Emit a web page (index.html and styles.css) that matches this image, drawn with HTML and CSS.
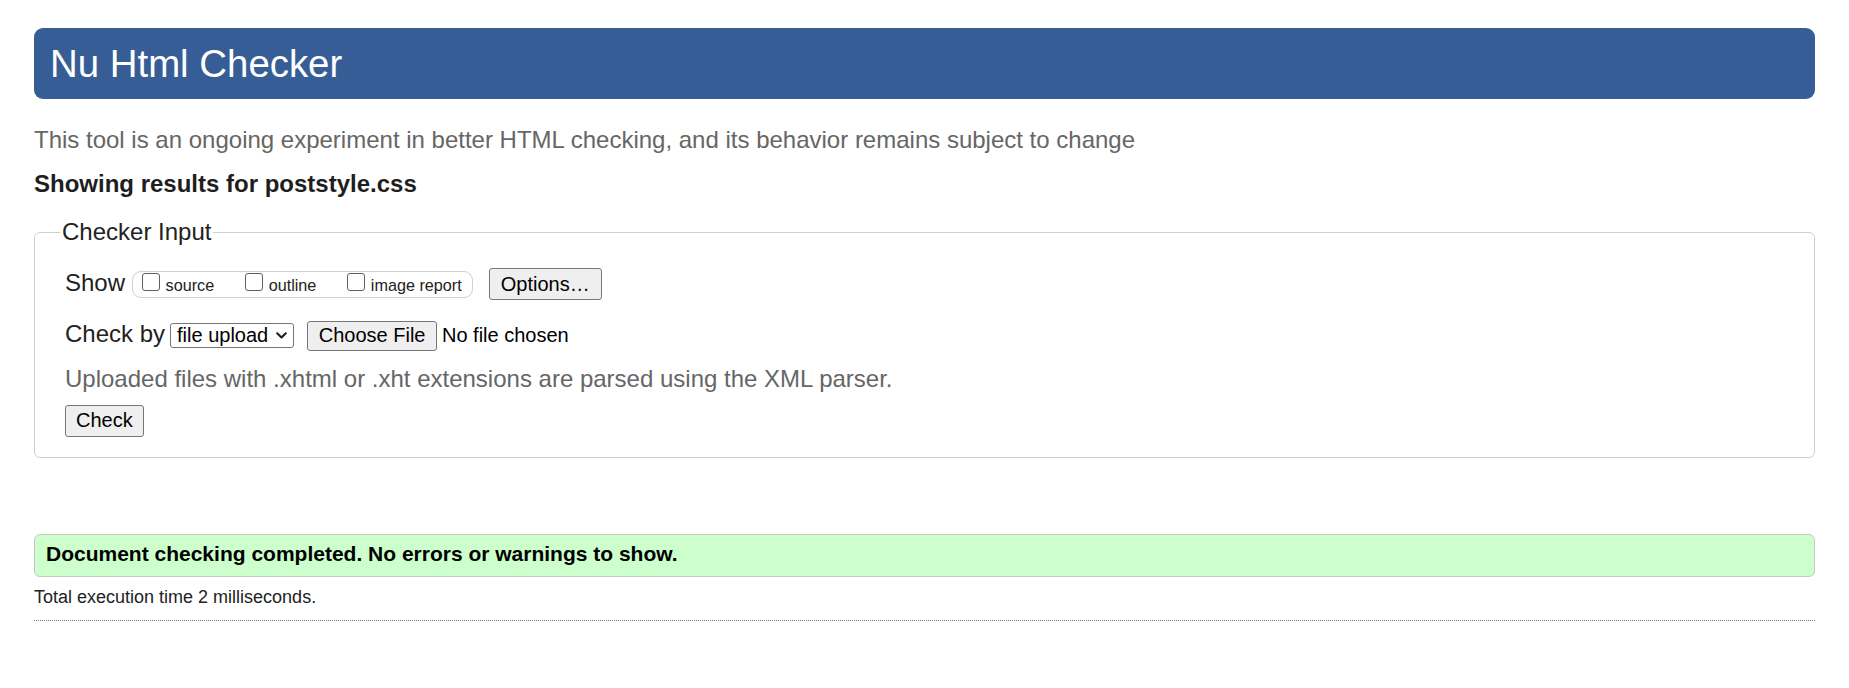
FILE: index.html
```html
<!DOCTYPE html>
<html lang="en">
<head>
<meta charset="utf-8">
<title>Showing results for poststyle.css - Nu Html Checker</title>
<link rel="stylesheet" href="styles.css">
</head>
<body>
<h1 class="title">Nu Html Checker</h1>
<p class="intro">This tool is an ongoing experiment in better HTML checking, and its behavior remains subject to change</p>
<p class="showing">Showing results for poststyle.css</p>
<form class="form" action="#">
  <fieldset class="input">
    <legend class="legend">Checker Input</legend>
    <div class="row">
      <span class="label">Show</span>
      <span class="pill">
        <label class="opt"><input type="checkbox" class="cb"><span class="opt-text">source</span></label>
        <label class="opt"><input type="checkbox" class="cb"><span class="opt-text">outline</span></label>
        <label class="opt"><input type="checkbox" class="cb"><span class="opt-text">image report</span></label>
      </span>
      <button type="button" class="btn btn-options">Options…</button>
    </div>
    <div class="row row-by">
      <span class="label">Check by</span>
      <span class="select"><span class="select-text">file upload</span><svg class="chev" width="11" height="7" viewBox="0 0 11 7"><path d="M1.2 1.2 L5.5 5.5 L9.8 1.2" fill="none" stroke="#1a1a1a" stroke-width="2" stroke-linecap="round" stroke-linejoin="round"/></svg></span>
      <button type="button" class="btn btn-file">Choose File</button>
      <span class="nofile">No file chosen</span>
    </div>
    <p class="hint">Uploaded files with .xhtml or .xht extensions are parsed using the XML parser.</p>
    <div class="row row-check">
      <button type="button" class="btn btn-check">Check</button>
    </div>
  </fieldset>
</form>
<p class="success">Document checking completed. No errors or warnings to show.</p>
<p class="time">Total execution time 2 milliseconds.</p>
<div class="rule"></div>
</body>
</html>
```
FILE: styles.css
```css
html, body {
  background: #fff;
}
body {
  margin: 0;
  padding: 28px 34px 20px;
  font-family: "Liberation Sans", Arial, sans-serif;
  color: #222;
}
.title {
  margin: 0;
  height: 71px;
  padding: 0 16px;
  background: #365d95;
  color: #fff;
  font-size: 38.4px;
  font-weight: normal;
  line-height: 71px;
  border-radius: 9px;
}
.intro {
  margin: 27px 0 0;
  font-size: 24px;
  line-height: 28px;
  color: #666;
}
.showing {
  margin: 16px 0 0;
  font-size: 24px;
  line-height: 28px;
  font-weight: bold;
  color: #1e1e1e;
}
.form {
  margin: 20px 0 0;
}
.input {
  margin: 0;
  padding: 22px 30px 20px;
  border: 1px solid #cfcfcf;
  border-radius: 6px;
  min-width: 0;
}
.legend {
  margin-left: -5px;
  padding: 0 2px;
  font-size: 24px;
  line-height: 28px;
  color: #222;
}
.row {
  display: flex;
  align-items: baseline;
}
.label {
  font-size: 24px;
  line-height: 28px;
}
.pill {
  display: inline-flex;
  align-items: flex-start;
  box-sizing: border-box;
  height: 27px;
  margin-left: 7px;
  padding: 0 10px 0 9px;
  border: 1px solid #d0d0d0;
  border-radius: 9px;
}
.opt {
  display: flex;
  align-items: baseline;
  margin-right: 31px;
}
.opt:last-child {
  margin-right: 0;
}
.cb {
  appearance: none;
  -webkit-appearance: none;
  box-sizing: border-box;
  width: 18px;
  height: 18px;
  margin: 1px 5.5px 0 0;
  border: 1px solid #5f5f5f;
  border-radius: 3px;
  background: #fff;
}
.opt-text {
  font-size: 16.2px;
  line-height: 18.6px;
  color: #222;
}
.btn {
  margin: 0;
  padding: 3.5px 10px;
  font-family: "Liberation Sans", Arial, sans-serif;
  font-size: 20px;
  line-height: 23px;
  color: #000;
  background: #efefef;
  border: 1px solid #767676;
  border-radius: 3px;
}
.btn-options {
  margin-left: 16px;
  padding-left: 11px;
  padding-right: 11px;
}
.row-by {
  margin-top: 20px;
}
.select {
  display: inline-flex;
  align-items: center;
  box-sizing: border-box;
  height: 25px;
  margin-left: 5px;
  padding: 0 6px 0 6px;
  border: 1px solid #767676;
  border-radius: 3px;
  background: #fff;
  font-size: 20px;
  line-height: 23px;
  color: #000;
}
.chev {
  margin-left: 8px;
}
.btn-file {
  margin-left: 13px;
  padding-top: 2.5px;
  padding-bottom: 2.5px;
  padding-left: 10.5px;
  padding-right: 10.5px;
}
.nofile {
  margin-left: 5px;
  font-size: 20px;
  line-height: 23px;
  color: #000;
}
.hint {
  margin: 14px 0 0;
  font-size: 24px;
  line-height: 28px;
  color: #666;
}
.row-check {
  margin-top: 12px;
}
.success {
  margin: 76px 0 0;
  padding: 7px 11px 10px;
  background: #ccffcc;
  border: 1px solid #c8c8c8;
  border-radius: 6px;
  font-size: 21px;
  line-height: 24px;
  font-weight: bold;
  color: #000;
}
.time {
  margin: 10px 0 0;
  font-size: 18px;
  line-height: 21px;
  color: #222;
}
.rule {
  margin-top: 12px;
  height: 0;
  border-top: 1px dotted #777;
}
```
